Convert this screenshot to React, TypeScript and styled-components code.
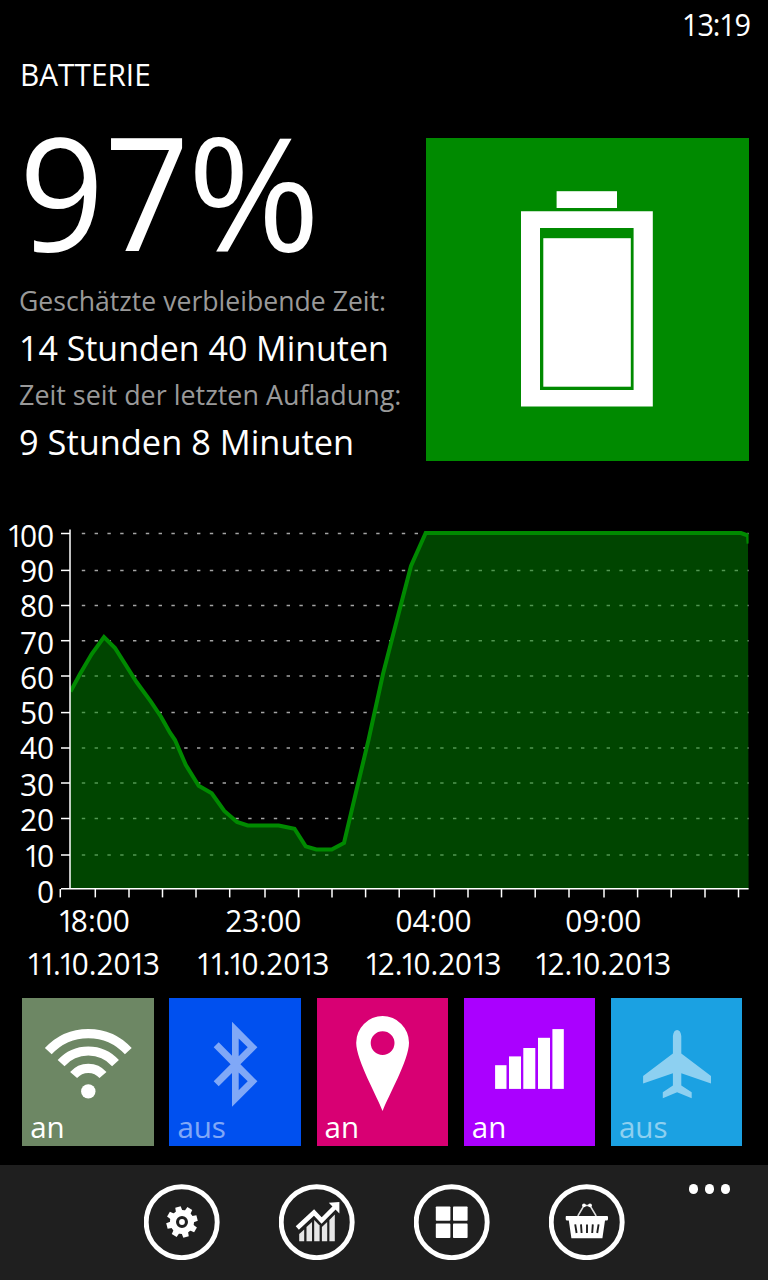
import React from "react";
import styled, { createGlobalStyle } from "styled-components";

const GlobalStyle = createGlobalStyle`
  html, body { margin: 0; padding: 0; background: #000; }
  * { box-sizing: border-box; }
`;

const ACCENT = "#008a00";

const Screen = styled.main`
  width: 768px;
  height: 1280px;
  display: flex;
  flex-direction: column;
  background: #000;
  color: #fff;
  font-family: "Open Sans", "Noto Sans", sans-serif;
  overflow: hidden;
`;

const Line = styled.div<{ $size: number; $height: number; $stretch?: number; $color?: string }>`
  font-size: ${(p) => p.$size}px;
  line-height: ${(p) => p.$height}px;
  height: ${(p) => p.$height}px;
  color: ${(p) => p.$color ?? "#fff"};
  white-space: pre;
  width: max-content;
  transform: scaleX(${(p) => p.$stretch ?? 1});
  transform-origin: left center;
`;

const StatusBar = styled.header`
  height: 48px;
  display: flex;
  justify-content: flex-end;
  padding-right: 18px;

  ${Line} {
    transform-origin: right center;
    letter-spacing: -0.04em;
  }
`;

const TitleBar = styled.div`
  height: 52px;
  padding-left: 20px;
`;

const Hero = styled.section`
  height: 410px;
  display: flex;
  justify-content: space-between;
  padding: 0 19px;
`;

const Stats = styled.div`
  width: 400px;
`;

const Percent = styled.span`
  display: inline-block;
  margin-left: -3px;
  transform: scaleX(1.08);
  transform-origin: left center;
`;

const BatteryTile = styled.div`
  flex: none;
  width: 323px;
  height: 323px;
  margin-top: 38px;
  background: ${ACCENT};
`;

const ChartSvg = styled.svg`
  display: block;
  flex: none;
  width: 768px;
  height: 488px;
`;

const ChartText = styled.text`
  fill: #fff;
  font-size: 31.7px;
`;

const Tiles = styled.section`
  display: flex;
  gap: 15.7px;
  height: 167px;
  padding-left: 22.2px;
`;

const Tile = styled.div<{ $bg: string; $on: boolean }>`
  flex: none;
  width: 131.5px;
  height: 147.5px;
  background: ${(p) => p.$bg};

  svg {
    display: block;
    width: 131.5px;
    height: 111.5px;
    overflow: visible;
    fill: #fff;
  }
  svg, div { opacity: ${(p) => (p.$on ? 1 : 0.5)}; }
`;

const TileLabel = styled.div`
  padding-left: 8px;
  font-size: 29.5px;
  line-height: 34px;
`;

const AppBar = styled.footer`
  height: 115px;
  display: flex;
  align-items: flex-start;
  gap: 59px;
  padding: 19.4px 38px 0 143.6px;
  background: #1f1f1f;
`;

const RoundButton = styled.button`
  flex: none;
  width: 76px;
  height: 76px;
  padding: 0;
  border: 0;
  background: none;

  svg { display: block; width: 76px; height: 76px; fill: #fff; }
`;

const MoreDots = styled.div`
  display: flex;
  gap: 6.6px;
  margin-left: auto;

  i {
    width: 9.2px;
    height: 9.2px;
    border-radius: 50%;
    background: #fff;
  }
`;

/* Offsets that set the narrow figure 1 closer to its neighbours. */
const kerning = (s: string) =>
  s
    .split("")
    .map((c, i) => {
      const prev = s[i - 1];
      let em = 0;
      if (prev === "1") em = -0.12;
      else if (prev === "." && c === "1") em = -0.08;
      else if (prev && c === "1") em = -0.03;
      return `${em}em`;
    })
    .join(" ");

const rows = [
  { v: 100, y: 533.5, b: 547 },
  { v: 90, y: 570.4, b: 582 },
  { v: 80, y: 605.5, b: 617 },
  { v: 70, y: 640.7, b: 654 },
  { v: 60, y: 676, b: 689 },
  { v: 50, y: 712.6, b: 724 },
  { v: 40, y: 748, b: 759 },
  { v: 30, y: 783, b: 796 },
  { v: 20, y: 818.5, b: 831 },
  { v: 10, y: 855, b: 867 },
];

const hourTicks = [
  60.3, 95.3, 129, 162.5, 196, 229.7, 265, 298.6, 332, 365.6, 399.2, 434.4, 468, 501.5, 535.2, 569,
  604, 637.6, 671.2, 705, 738.5,
];

const dates = [
  { x: 93.6, time: "18:00", date: "11.10.2013" },
  { x: 263.3, time: "23:00", date: "11.10.2013" },
  { x: 433.5, time: "04:00", date: "12.10.2013" },
  { x: 603.3, time: "09:00", date: "12.10.2013" },
];

const curve =
  "70.5,691.5 80,674 91.7,654 104,637 115,648 136.7,682.3 150.7,701.3 161,716.7 170,732.7 175,740 " +
  "185.7,764.7 198.7,785.7 211.7,793.3 224.3,811 237,822 247.7,825.5 278.7,825.5 294.5,828.7 " +
  "305.7,846.3 316.3,849.4 331.7,849.4 344,843 357,788 368.5,740 383,674 399,612 411,566 425.7,533 741,533 748,535.5";

const Chart = () => (
  <ChartSvg viewBox="0 510 768 488">
    <defs>
      <clipPath id="plot">
        <rect x="70" y="520" width="678.6" height="369" />
      </clipPath>
    </defs>
    {rows.map((r) => (
      <g key={r.v} stroke="#fff">
        <path d={`M61 ${r.y}H70`} strokeWidth="1.5" />
        <path
          d={`M81.8 ${r.y}H748.6`}
          stroke="#a4a4a4"
          strokeWidth="1.5"
          strokeDasharray="3.4 9.4"
        />
      </g>
    ))}
    <g clipPath="url(#plot)">
      <polygon points={`70,889 70,691 ${curve} 749,889`} fill={ACCENT} opacity="0.5" />
      <polyline points={`${curve} 748.6,543.5`} fill="none" stroke={ACCENT} strokeWidth="4" />
    </g>
    <g stroke="#fff" strokeWidth="1.5">
      <path d="M70 529.5V889M61 888.8H748.6" />
      {hourTicks.map((x) => (
        <path key={x} d={`M${x} 889V897.4`} />
      ))}
    </g>
    {[...rows, { v: 0, b: 903 }].map((r) => (
      <ChartText
        key={r.v}
        textAnchor="end"
        dx={kerning(String(r.v))}
        transform={`translate(54.2 ${r.b}) scale(0.945 1)`}
      >
        {r.v}
      </ChartText>
    ))}
    {dates.map((d) => (
      <g key={d.x} textAnchor="middle">
        <ChartText dx={kerning(d.time)} transform={`translate(${d.x} 932) scale(0.94 1)`}>
          {d.time}
        </ChartText>
        <ChartText dx={kerning(d.date)} transform={`translate(${d.x - 0.6} 975) scale(0.935 1)`}>
          {d.date}
        </ChartText>
      </g>
    ))}
  </ChartSvg>
);

const WifiIcon = () => (
  <svg viewBox="0 0 131.5 111.5">
    <g fill="none" stroke="#fff" strokeWidth="9.2">
      <path d="M26.3 53.2A54.2 54.2 0 0 1 106.3 53.2" />
      <path d="M39.1 65.1A36.6 36.6 0 0 1 93.5 65.1" />
      <path d="M51.6 77.1A19.4 19.4 0 0 1 81 77.1" />
    </g>
    <circle cx="66.3" cy="93.4" r="7.2" />
  </svg>
);

const BluetoothIcon = () => (
  <svg viewBox="0 0 131.5 111.5">
    <path
      fillRule="evenodd"
      d="M63 23.8L88.4 49.3 71.4 66.3 88.4 83.3 63 108.8V75L49.7 88.3 44.7 83.3 61.6 66.3 44.7 49.3 49.7 44.3 63 57.7ZM69.7 40.5V58.2L78.7 49.3ZM69.7 74.4V92.2L78.7 83.3Z"
    />
  </svg>
);

const PinIcon = () => (
  <svg viewBox="0 0 131.5 111.5">
    <path
      fillRule="evenodd"
      d="M65.6 113C60.5 99 39.2 62 39.2 44.7A26.4 26.6 0 0 1 92 44.7C92 62 70.7 99 65.6 113ZM65.6 33.2A11.9 11.9 0 1 0 65.6 57A11.9 11.9 0 1 0 65.6 33.2Z"
    />
  </svg>
);

const SignalIcon = () => (
  <svg viewBox="0 0 131.5 111.5">
    <rect x="31.1" y="67.2" width="11.4" height="23.7" />
    <rect x="45" y="58.4" width="12" height="32.5" />
    <rect x="59.3" y="50" width="12" height="40.9" />
    <rect x="74" y="39.8" width="12" height="51.1" />
    <rect x="88.4" y="31.1" width="11.4" height="59.8" />
  </svg>
);

const PlaneIcon = () => (
  <svg viewBox="0 0 131.5 111.5">
    <path d="M61.9 55.4V38Q62.6 32 66.1 32Q69.6 32 70.3 38V55.4L100 78V85.4L70.3 75.2V87.6L80.7 94.3V100.2L66.1 94.3 51.8 100.2V94.3L61.9 87.6V75.2L32.1 85.4V78Z" />
  </svg>
);

const tiles = [
  { bg: "#6d8764", on: true, icon: <WifiIcon /> },
  { bg: "#0050ef", on: false, icon: <BluetoothIcon /> },
  { bg: "#d80073", on: true, icon: <PinIcon /> },
  { bg: "#aa00ff", on: true, icon: <SignalIcon /> },
  { bg: "#1ba1e2", on: false, icon: <PlaneIcon /> },
];

const Ring = () => <circle cx="37.7" cy="38.2" r="35.5" fill="none" stroke="#fff" strokeWidth="4.9" />;

const GearIcon = () => (
  <svg viewBox="0 0 76 76">
    <Ring />
    <circle cx="38" cy="38" r="9" fill="none" stroke="#fff" strokeWidth="6" />
    {[0, 1, 2, 3, 4, 5, 6, 7].map((i) => (
      <path key={i} d="M34.6 28L35.2 22.4H40.8L41.4 28Z" transform={`rotate(${i * 45 - 15} 38 38)`} />
    ))}
    <circle cx="38" cy="38" r="2.9" />
  </svg>
);

const StatsIcon = () => (
  <svg viewBox="0 0 76 76">
    <Ring />
    <path d="M18.3 44L35 28.5 42.6 36.5 56 23" fill="none" stroke="#fff" strokeWidth="4.6" />
    <path d="M60.4 18V29.4L49.8 18.8Z" />
    <g fill="#e6e6e6">
      <path d="M20.2 57.3V50L25.2 45.5V57.3Z" />
      <path d="M27.5 57.3V43L33 38V57.3Z" />
      <path d="M35.2 57.3V36L40.6 41.5V57.3Z" />
      <path d="M42.9 57.3V43L48.2 38V57.3Z" />
      <path d="M50.4 57.3V36L55.8 30.5V57.3Z" />
    </g>
  </svg>
);

const TilesIcon = () => (
  <svg viewBox="0 0 76 76">
    <Ring />
    <rect x="21.8" y="22.4" width="14.6" height="14.4" rx="0.8" />
    <rect x="39" y="22.4" width="14.6" height="14.4" rx="0.8" />
    <rect x="21.8" y="39.6" width="14.6" height="14.4" rx="0.8" />
    <rect x="39" y="39.6" width="14.6" height="14.4" rx="0.8" />
  </svg>
);

const BasketIcon = () => (
  <svg viewBox="0 0 76 76">
    <Ring />
    <path d="M28.8 32L35 21.5H41L47.2 32" fill="none" stroke="#ddd" strokeWidth="1.5" />
    <circle cx="35" cy="21.3" r="1.9" />
    <circle cx="41" cy="21.3" r="1.9" />
    <path d="M17.4 31.9H58Q59 31.9 59 33V35Q59 36.6 57.6 36.6H56L53.4 54.3H22.4L19.8 36.6H18.2Q16.7 36.6 16.7 35V33Q16.7 31.9 17.4 31.9Z" />
    <g stroke="#1f1f1f" strokeWidth="1.9">
      <path d="M26.2 40.4L27.6 49M32 40.4L32.6 49M38 40.4V49M43.8 40.4L43.2 49M49.6 40.4L48.2 49" />
    </g>
  </svg>
);

export default function App() {
  return (
    <>
      <GlobalStyle />
      <Screen>
        <StatusBar>
          <Line $size={31} $height={48} $stretch={0.93}>13:19</Line>
        </StatusBar>
        <TitleBar>
          <Line $size={31.7} $height={52} $stretch={0.94}>BATTERIE</Line>
        </TitleBar>
        <Hero>
          <Stats>
            <Line $size={157} $height={180} $stretch={0.95}>97<Percent>%</Percent></Line>
            <Line $size={27.5} $height={41} $stretch={0.968} $color="#999">Geschätzte verbleibende Zeit:</Line>
            <Line $size={35} $height={53} $stretch={0.97}>14 Stunden 40 Minuten</Line>
            <Line $size={27.5} $height={41} $stretch={0.978} $color="#999">Zeit seit der letzten Aufladung:</Line>
            <Line $size={35} $height={53} $stretch={0.982}>9 Stunden 8 Minuten</Line>
          </Stats>
          <BatteryTile>
            <svg width="323" height="323" viewBox="0 0 323 323" fill="#fff">
              <rect x="130.6" y="53.2" width="60.4" height="16.8" />
              <path fillRule="evenodd" d="M95 73.2H226.8V268.6H95ZM114 90V252H207.6V90Z" />
              <rect x="117.3" y="100.2" width="87.5" height="148.5" />
            </svg>
          </BatteryTile>
        </Hero>
        <Chart />
        <Tiles>
          {tiles.map((t) => (
            <Tile key={t.bg} $bg={t.bg} $on={t.on}>
              {t.icon}
              <TileLabel>{t.on ? "an" : "aus"}</TileLabel>
            </Tile>
          ))}
        </Tiles>
        <AppBar>
          <RoundButton><GearIcon /></RoundButton>
          <RoundButton><StatsIcon /></RoundButton>
          <RoundButton><TilesIcon /></RoundButton>
          <RoundButton><BasketIcon /></RoundButton>
          <MoreDots><i /><i /><i /></MoreDots>
        </AppBar>
      </Screen>
    </>
  );
}
